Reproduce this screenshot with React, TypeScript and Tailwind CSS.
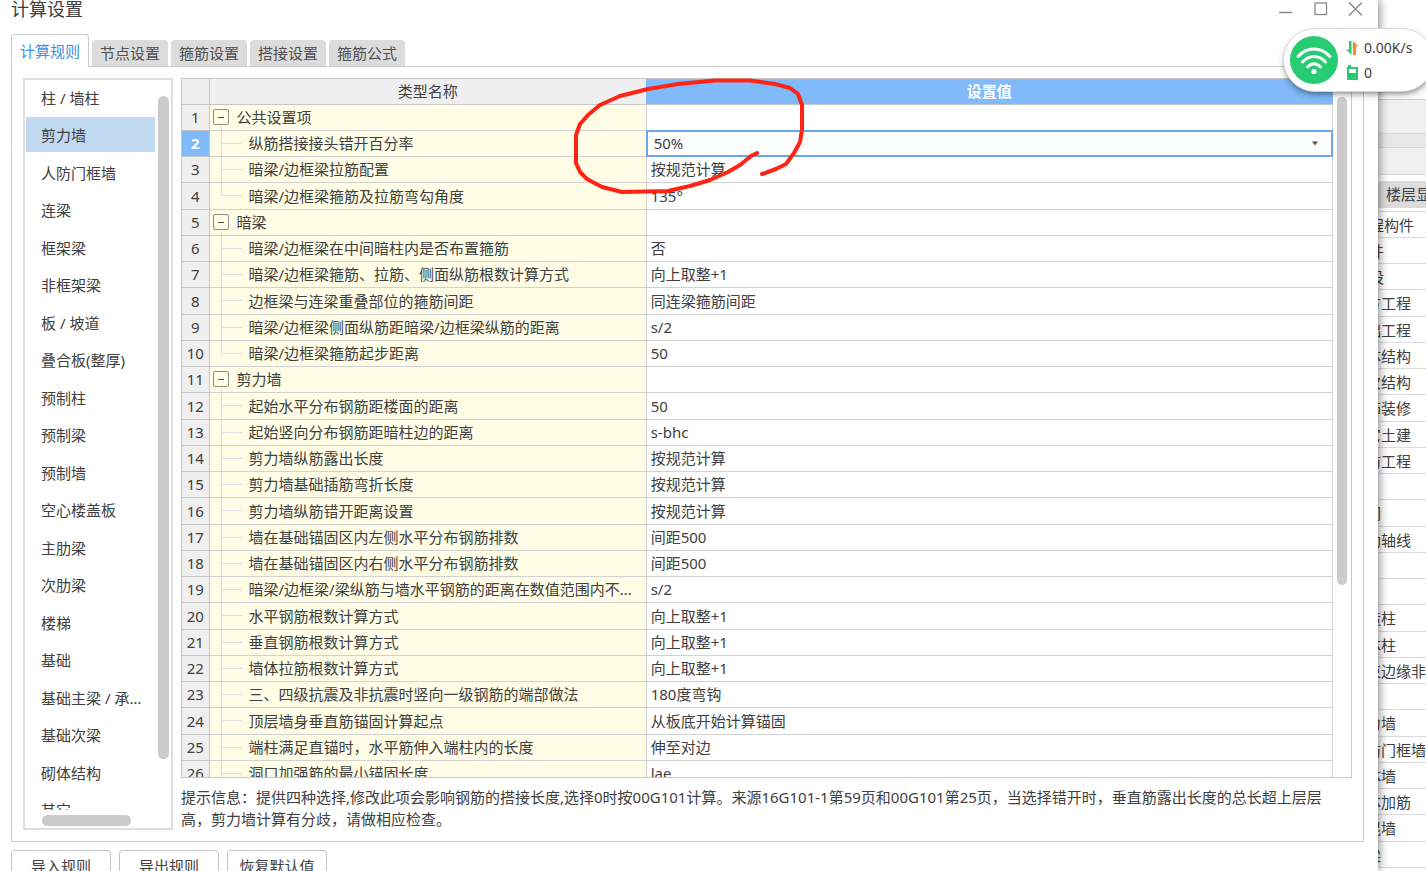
import { useState } from "react";
import clsx from "clsx";

interface Rule {
  name: string;
  value?: string;
  group?: boolean;
  last?: boolean;
}

const TABS = ["计算规则", "节点设置", "箍筋设置", "搭接设置", "箍筋公式"];

const CATEGORIES = [
  "柱 / 墙柱",
  "剪力墙",
  "人防门框墙",
  "连梁",
  "框架梁",
  "非框架梁",
  "板 / 坡道",
  "叠合板(整厚)",
  "预制柱",
  "预制梁",
  "预制墙",
  "空心楼盖板",
  "主肋梁",
  "次肋梁",
  "楼梯",
  "基础",
  "基础主梁 / 承台梁",
  "基础次梁",
  "砌体结构",
  "其它",
];

const RULES: Rule[] = [
  { name: "公共设置项", group: true },
  { name: "纵筋搭接接头错开百分率", value: "50%" },
  { name: "暗梁/边框梁拉筋配置", value: "按规范计算" },
  { name: "暗梁/边框梁箍筋及拉筋弯勾角度", value: "135°", last: true },
  { name: "暗梁", group: true },
  { name: "暗梁/边框梁在中间暗柱内是否布置箍筋", value: "否" },
  { name: "暗梁/边框梁箍筋、拉筋、侧面纵筋根数计算方式", value: "向上取整+1" },
  { name: "边框梁与连梁重叠部位的箍筋间距", value: "同连梁箍筋间距" },
  { name: "暗梁/边框梁侧面纵筋距暗梁/边框梁纵筋的距离", value: "s/2" },
  { name: "暗梁/边框梁箍筋起步距离", value: "50", last: true },
  { name: "剪力墙", group: true },
  { name: "起始水平分布钢筋距楼面的距离", value: "50" },
  { name: "起始竖向分布钢筋距暗柱边的距离", value: "s-bhc" },
  { name: "剪力墙纵筋露出长度", value: "按规范计算" },
  { name: "剪力墙基础插筋弯折长度", value: "按规范计算" },
  { name: "剪力墙纵筋错开距离设置", value: "按规范计算" },
  { name: "墙在基础锚固区内左侧水平分布钢筋排数", value: "间距500" },
  { name: "墙在基础锚固区内右侧水平分布钢筋排数", value: "间距500" },
  { name: "暗梁/边框梁/梁纵筋与墙水平钢筋的距离在数值范围内不计算", value: "s/2" },
  { name: "水平钢筋根数计算方式", value: "向上取整+1" },
  { name: "垂直钢筋根数计算方式", value: "向上取整+1" },
  { name: "墙体拉筋根数计算方式", value: "向上取整+1" },
  { name: "三、四级抗震及非抗震时竖向一级钢筋的端部做法", value: "180度弯钩" },
  { name: "顶层墙身垂直筋锚固计算起点", value: "从板底开始计算锚固" },
  { name: "端柱满足直锚时，水平筋伸入端柱内的长度", value: "伸至对边" },
  { name: "洞口加强筋的最小锚固长度", value: "lae" },
];

const OUTLINE = [
  "程构件", "件", "设", "方工程", "础工程", "体结构", "次结构", "饰装修", "它土建", "防工程",
  "", "网", "助轴线", "", "", "造柱", "体柱", "束边缘非阴影", "", "力墙", "防门框墙", "体墙",
  "体加筋", "混墙", "梁",
];

function WindowButtons() {
  return (
    <div className="flex h-4 items-center gap-5 pr-[15px] text-[#8a8a8a]">
      <button aria-label="最小化">
        <svg width="15" height="15" viewBox="0 0 15 15" stroke="currentColor" fill="none">
          <path d="M1 11.5h13" strokeWidth="1.5" />
        </svg>
      </button>
      <button aria-label="最大化">
        <svg width="15" height="15" viewBox="0 0 15 15" stroke="currentColor" fill="none">
          <rect x="2" y="2" width="11.5" height="11.5" strokeWidth="1.3" />
        </svg>
      </button>
      <button aria-label="关闭">
        <svg width="15" height="15" viewBox="0 0 15 15" stroke="currentColor" fill="none">
          <path d="M1 1.500l13 13M14 1.500l-13 13" strokeWidth="1.4" />
        </svg>
      </button>
    </div>
  );
}

function Sidebar({ selected, onSelect }: { selected: string; onSelect: (name: string) => void }) {
  return (
    <nav className="relative flex w-[150px] shrink-0 flex-col border-2 border-[#dcdedf] pb-[18px]">
      <ul className="h-0 grow overflow-hidden pr-4 pl-px">
        {CATEGORIES.map((name) => (
          <li key={name} className="h-[37px] even:h-[38px]">
            <button
              onClick={() => onSelect(name)}
              className={clsx(
                "block h-[35px] w-full truncate pr-2 pl-[15px] text-left",
                name === selected && "bg-[#c1d8f1]"
              )}
            >
              {name}
            </button>
          </li>
        ))}
      </ul>
      {/* Scroll thumbs */}
      <div className="absolute top-4 right-0.5 bottom-[69px] w-[11px] rounded-full bg-[#cbcbcb]" />
      <div className="absolute bottom-0.5 left-[17px] h-[11px] w-[89px] rounded-full bg-[#cbcbcb]" />
    </nav>
  );
}

function TreeCell({ rule }: { rule: Rule }) {
  if (rule.group) {
    return (
      <div className="relative flex h-[25px] items-center gap-2 pl-[3px]">
        <button aria-label="折叠" className="grid size-4 place-items-center rounded-xs border border-[#8e8e88]">
          <span className="h-px w-1.5 bg-[#555]" />
        </button>
        <span>{rule.name}</span>
        <span className="absolute bottom-0 left-[11px] h-1 w-px bg-[#dddde4]" />
      </div>
    );
  }
  return (
    <div className="flex h-[25px] items-center pl-[11px]">
      <span className={clsx("flex w-px self-stretch", rule.last && "pb-3")}>
        <span className="w-px bg-[#dddde4]" />
      </span>
      <span className="h-px w-5 shrink-0 bg-[#dddde4]" />
      <span className="truncate pr-2 pl-[7px]">{rule.name}</span>
    </div>
  );
}

function RuleTable() {
  const [percent, setPercent] = useState("50%");

  return (
    <div className="flex h-0 grow overflow-hidden border border-[#c6c8ca]">
      <div className="min-w-0 grow">
        <table className="w-full table-fixed border-collapse">
          <colgroup>
            <col className="w-[27px]" />
            <col className="w-[38%]" />
            <col />
          </colgroup>
          <thead>
            <tr className="h-[25px] bg-[#efefef]">
              <th aria-label="序号" className="border-r border-b border-[#c6c6c6]" />
              <th className="border-b border-[#c6c6c6] font-normal">类型名称</th>
              <th className="border-b border-[#c6c6c6] bg-[#80bafa] text-white">设置值</th>
            </tr>
          </thead>
          <tbody>
            {RULES.map((rule, i) => (
              <tr key={i} className="h-[26px] nth-[4n]:h-[27px]">
                <td
                  className={clsx(
                    "border-r border-b border-[#c6c6c6] text-center",
                    i === 1 ? "bg-[#80bafa] font-bold text-white" : "bg-[#efefef]"
                  )}
                >
                  {i + 1}
                </td>
                <td className="border-r border-b border-[#d2d2d2] bg-[#fffde5]">
                  <TreeCell rule={rule} />
                </td>
                {i === 1 ? (
                  <td className="border-r border-b border-[#d2d2d2]">
                    <div className="relative flex h-[25px] items-center outline-2 -outline-offset-1 outline-[#68a7ea]">
                      <select
                        aria-label={rule.name}
                        value={percent}
                        onChange={(e) => setPercent(e.target.value)}
                        className="h-full w-full appearance-none bg-transparent pl-[7px] outline-none"
                      >
                        <option>50%</option>
                        <option>25%</option>
                        <option>100%</option>
                      </select>
                      <svg className="pointer-events-none absolute right-3.5" width="6" height="5" viewBox="0 0 6 5">
                        <path d="M0 .5h6L3 4.500z" fill="#4a5560" />
                      </svg>
                    </div>
                  </td>
                ) : (
                  <td className="truncate border-r border-b border-[#d2d2d2] pl-1">{rule.value}</td>
                )}
              </tr>
            ))}
          </tbody>
        </table>
      </div>
      <div className="w-[18px] shrink-0 pt-[18px] pl-1">
        <div className="h-[488px] w-2.5 rounded-full bg-[#cbcbcb]" />
      </div>
    </div>
  );
}

function Outline() {
  return (
    <aside className="-ml-3 flex w-15 shrink-0 flex-col overflow-hidden bg-white whitespace-nowrap">
      <div className="h-25 shrink-0 border-b border-[#d0d0d0]" />
      <div className="h-[33px] shrink-0 bg-[#f0f0f0]" />
      <div className="h-[15px] shrink-0 border-y border-[#d8d8d8] bg-[#e7e7e7]" />
      <div className="h-[27px] shrink-0 border-b border-[#d8d8d8] bg-[#f0f0f0]" />
      <div className="mt-1.5 ml-3 h-[27px] shrink-0 rounded-tl-sm bg-[#dcdcdc] pl-2 leading-[27px]">楼层显示</div>
      <ul className="mt-[3px] border-t border-[#dcdcdc]">
        {OUTLINE.map((name, i) => (
          <li
            key={i}
            className={clsx(
              "h-[26px] border-b border-[#dcdcdc] leading-[26px] nth-[4n]:h-[27px]",
              i < 3 && "pl-[3px]"
            )}
          >
            {name}
          </li>
        ))}
      </ul>
    </aside>
  );
}

function NetworkWidget() {
  return (
    <div className="absolute top-7 -right-2 z-20 flex h-16 w-[151px] items-center gap-2 rounded-full border border-[#dadada] bg-white pl-1.5 text-sm shadow-md shadow-black/30">
      <svg width="48" height="48" viewBox="0 0 48 48" fill="none" stroke="white" strokeWidth="3" strokeLinecap="round">
        <circle cx="24" cy="24" r="24" fill="#27cb72" stroke="none" />
        <path d="M8 20.500c9-10 23-10 32 0M12.500 26c6.500-7.500 16.500-7.500 23 0M17.500 31c4-4.500 9-4.500 13 0" />
        <circle cx="24" cy="35.500" r="2.600" fill="white" stroke="none" />
      </svg>
      <div className="flex flex-col gap-[5px]">
        <div className="flex h-5 items-center gap-[5px]">
          <svg width="13" height="14" viewBox="0 0 13 14">
            <path d="M3 0h2.500v14L0 8.500h3z" fill="#27cb72" />
            <path d="M7 0l5.500 5.500H10V14H7z" fill="#fb8a1e" />
          </svg>
          <span>0.00K/s</span>
        </div>
        <div className="flex h-5 items-center gap-[5px]">
          <svg width="13" height="15" viewBox="0 0 13 15">
            <path d="M2 0h3v2h7v13H1V2h1z" fill="#27cb72" />
            <path d="M3 4h7v4H3z" fill="white" />
          </svg>
          <span>0</span>
        </div>
      </div>
    </div>
  );
}

export default function App() {
  const [tab, setTab] = useState(TABS[0]);
  const [category, setCategory] = useState("剪力墙");

  return (
    <div className="relative flex h-screen overflow-hidden bg-white font-['Noto_Sans','Noto_Sans_CJK_SC',sans-serif] text-[15px] leading-[22px] text-[#404040]">
      <main className="relative z-10 flex min-w-0 grow flex-col bg-white shadow-[0_0_10px_rgba(0,0,0,0.6)]">
        <header className="flex h-[34px] shrink-0 items-start justify-between pl-[11px]">
          <h1 className="text-[18px] leading-[18px]">计算设置</h1>
          <WindowButtons />
        </header>

        <div role="tablist" className="relative z-10 mx-[11px] -mb-px flex shrink-0 items-end gap-[3px]">
          {TABS.map((name) => (
            <button
              key={name}
              role="tab"
              aria-selected={name === tab}
              onClick={() => setTab(name)}
              className={clsx(
                "rounded-t-[4px] px-2",
                name === tab
                  ? "h-[33px] border border-b-0 border-[#c8cccf] bg-white text-[#3d8fe8]"
                  : "mb-px h-[26px] bg-[#dcdcdc] text-[#505050]"
              )}
            >
              {name}
            </button>
          ))}
        </div>

        <section className="mr-3.5 mb-2 ml-[11px] flex h-[776px] shrink-0 gap-2 border border-[#c8cccf] p-[11px]">
          <Sidebar selected={category} onSelect={setCategory} />
          <div className="flex min-w-0 grow flex-col">
            <RuleTable />
            <p className="pt-2 pr-3">
              提示信息：提供四种选择,修改此项会影响钢筋的搭接长度,选择0时按00G101计算。来源16G101-1第59页和00G101第25页，当选择错开时，垂直筋露出长度的总长超上层层高，剪力墙计算有分歧，请做相应检查。
            </p>
          </div>
        </section>

        <footer className="flex shrink-0 gap-2 pl-[11px]">
          {["导入规则", "导出规则", "恢复默认值"].map((label) => (
            <button key={label} className="h-8 w-25 rounded-[4px] border border-[#c4c4c4]">
              {label}
            </button>
          ))}
        </footer>

        {/* Pen mark around the selected value */}
        <svg
          className="pointer-events-none absolute top-[70px] left-[560px]"
          width="300"
          height="150"
          viewBox="0 0 300 150"
          fill="none"
          stroke="#ff2413"
          strokeWidth="4"
          strokeLinecap="round"
          strokeLinejoin="round"
        >
          <path d="M197 83L191 86 180 95 168 102 150 110 130 116 108 121 62 122 42 117 27 109 20 102 16 93V65L20 54 28 45 40 35 60 26 88 19 118 14 155 10.500H190L215 14 230 18 238 24 242 35V60L240 72 234 83 226 94 216 99 202 104" />
        </svg>
      </main>

      <Outline />
      <NetworkWidget />
    </div>
  );
}
